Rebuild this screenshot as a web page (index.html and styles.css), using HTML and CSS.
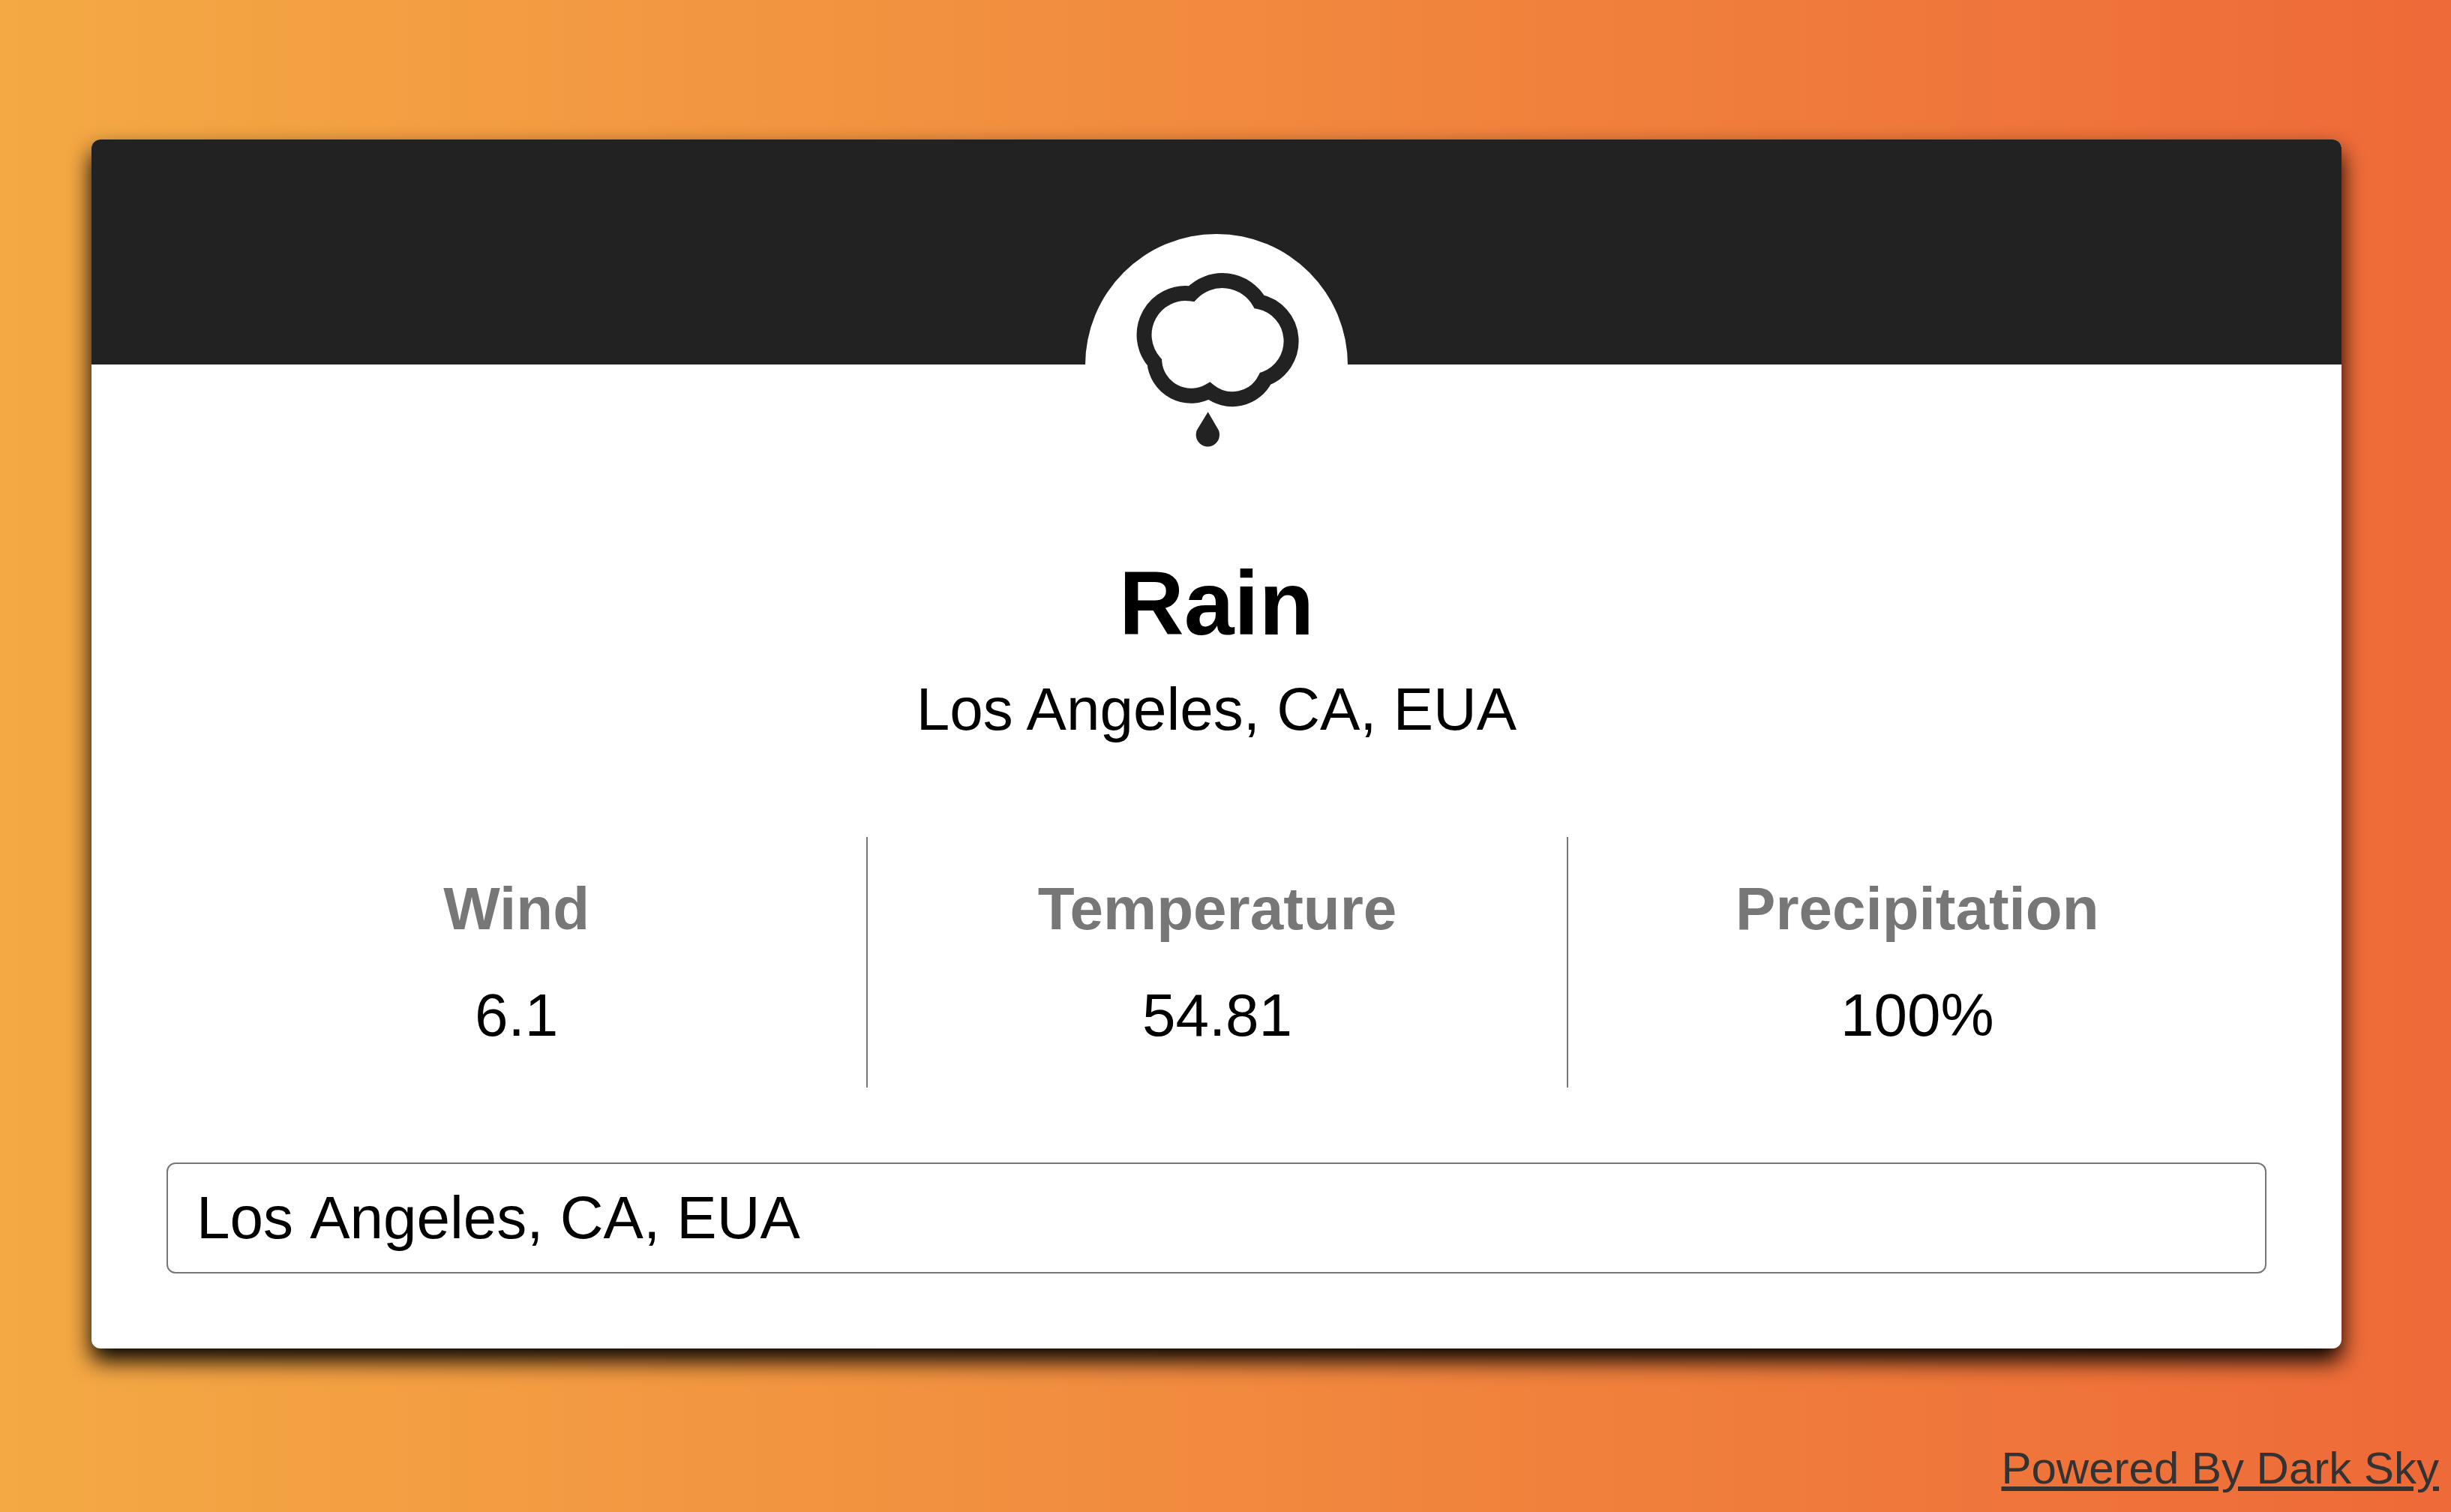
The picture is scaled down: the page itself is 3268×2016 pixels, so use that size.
FILE: index.html
```html
<!DOCTYPE html>
<html lang="en">
<head>
<meta charset="utf-8">
<meta name="viewport" content="width=device-width, initial-scale=1">
<title>Weather</title>
<link rel="stylesheet" href="styles.css">
</head>
<body>
<main class="page">
  <section class="card">
    <header class="card-header">
      <div class="icon-badge">
        <svg class="icon" viewBox="84 66 1050 1050" role="img" aria-label="Rain">
          <path class="cloud" d="M509 305A166 166 0 0 0 361 579A147 147 0 0 0 580 694A147 147 0 0 0 804 645A161 161 0 0 0 780 337A171 171 0 0 0 509 305Z"/>
          <path class="drop" d="M575 778L613 843A47 47 0 1 1 535 843Z"/>
        </svg>
      </div>
    </header>
    <div class="card-body">
      <h1 class="summary">Rain</h1>
      <p class="location">Los Angeles, CA, EUA</p>
      <dl class="metrics">
        <div class="metric"><dt class="label">Wind</dt><dd class="value">6.1</dd></div>
        <div class="metric"><dt class="label">Temperature</dt><dd class="value">54.81</dd></div>
        <div class="metric"><dt class="label">Precipitation</dt><dd class="value">100%</dd></div>
      </dl>
      <input class="search" type="text" aria-label="City" value="Los Angeles, CA, EUA">
    </div>
  </section>
</main>
<a class="credit" href="#">Powered By Dark Sky</a>
</body>
</html>
```
FILE: styles.css
```css
*, *::before, *::after { box-sizing: border-box; }

body {
  margin: 0;
  min-height: 100vh;
  background: linear-gradient(to right, #f4a944, #ee6a38);
  font-family: "Liberation Sans", Arial, sans-serif;
  font-size: 80px;
  line-height: 92px;
  color: #000;
}

.page {
  display: flex;
  justify-content: center;
  align-items: center;
  min-height: 100vh;
  padding: 0 24px 32px 0;
}

.card {
  width: 100%;
  max-width: 3000px;
  background: #fff;
  border-radius: 12px;
  box-shadow: 0 16px 30px #000;
}

.card-header {
  display: flex;
  justify-content: center;
  height: 300px;
  padding-top: 126px;
  background: #222;
  border-radius: 12px 12px 0 0;
}

.icon-badge {
  width: 350px;
  height: 350px;
  border-radius: 50%;
  background: #fff;
}

.icon { display: block; width: 100%; height: 100%; }
.cloud { fill: none; stroke: #222; stroke-width: 60; }
.drop { fill: #222; }

.card-body {
  padding: 248px 100px 100px;
  text-align: center;
}

.summary {
  margin: 0 0 26px;
  font-size: 120px;
  line-height: 140px;
}

.location { margin: 0 0 124px; }

.metrics {
  display: grid;
  grid-template-columns: repeat(3, 1fr);
  margin: 0 0 100px;
}

.metric {
  display: flex;
  flex-direction: column;
  gap: 50px;
  padding: 50px 0;
}

.metric + .metric { border-left: 2px solid #777; }

.label { font-weight: bold; color: #777; }
.value { margin: 0; }

.search {
  display: block;
  width: 100%;
  height: 148px;
  padding: 0 38px;
  border: 2px solid #777;
  border-radius: 12px;
  background: #fff;
  font: inherit;
  font-kerning: none;
  color: inherit;
}

.credit {
  position: absolute;
  right: 16px;
  bottom: 24px;
  font-size: 60px;
  line-height: 68px;
  color: #333;
  text-decoration-thickness: 6px;
  text-underline-offset: 4px;
}
```
